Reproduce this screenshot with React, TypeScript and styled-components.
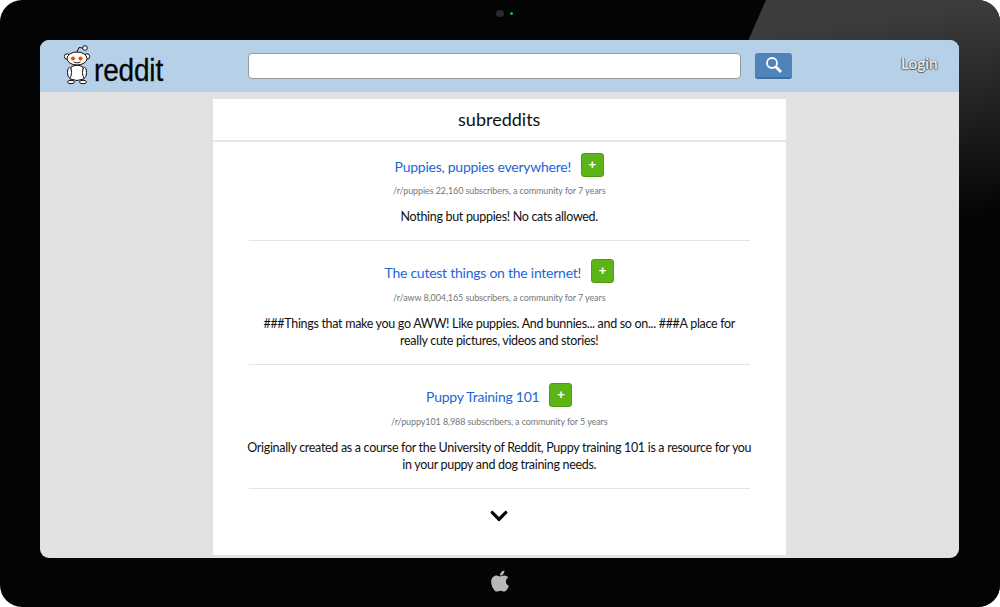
import React from "react";
import styled, { createGlobalStyle } from "styled-components";
import { FaApple, FaChevronDown } from "react-icons/fa";

const Global = createGlobalStyle`
  html, body { margin: 0; padding: 0; background: #fff; }
  body { font-family: Lato, "Open Sans", sans-serif; width: 1000px; height: 607px; overflow: hidden; }
  * { box-sizing: border-box; }
`;

const Tablet = styled.div`
  position: relative;
  width: 1000px;
  height: 607px;
  background: #040404;
  border-radius: 22px;
  box-shadow: inset -1px 0 0 #6a6a6a;
  padding: 40px 41px 49px 40px;
  overflow: hidden;
`;

const Glare = styled.div`
  position: absolute;
  inset: 0;
  background: linear-gradient(172deg, #404040 0, #3c3c3c 140px, #222 240px, #040404 350px);
  clip-path: polygon(766px 0, 1000px 0, 1000px 607px, 500px 607px);
`;

const Camera = styled.div`
  position: absolute;
  top: 10px;
  left: 496px;
  width: 8px;
  height: 7px;
  border-radius: 50%;
  background: #2a2a2e;
`;

const Led = styled.div`
  position: absolute;
  top: 12px;
  left: 510px;
  width: 3px;
  height: 3px;
  border-radius: 50%;
  background: #17b53a;
`;

const Screen = styled.div`
  position: relative;
  height: 518px;
  background: #e2e2e2;
  border-radius: 9px;
  overflow: hidden;
  display: flex;
  flex-direction: column;
`;

const Header = styled.header`
  height: 52px;
  background: #b6d1e7;
  display: flex;
  align-items: flex-start;
  flex-shrink: 0;
`;

const Logo = styled.div`
  width: 208px;
  padding: 5px 0 0 24px;
  display: flex;
  align-items: flex-start;
`;

const LogoWord = styled.span`
  display: inline-block;
  font-family: "Liberation Sans", Arial, sans-serif;
  font-size: 32px;
  line-height: 36px;
  letter-spacing: -0.2px;
  color: #050505;
  margin: 7px 0 0 2px;
  transform: scaleX(0.875);
  transform-origin: left center;
  -webkit-text-stroke: 0.3px #050505;
`;

const SearchInput = styled.input`
  width: 493px;
  height: 26px;
  margin-top: 13px;
  background: #fff;
  border: 1px solid #8f9aa3;
  border-radius: 4px;
  outline: none;
`;

const SearchButton = styled.button`
  width: 37px;
  height: 26px;
  margin: 13px 0 0 14px;
  background: #4e84ba;
  border: none;
  border-bottom: 2px solid #3f6f9f;
  border-radius: 3px;
  color: #fff;
  display: flex;
  align-items: center;
  justify-content: center;
  padding: 0;
`;

const Login = styled.a`
  margin: 12px 0 0 109px;
  font-size: 15.5px;
  line-height: 22px;
  color: #f2f5f8;
  -webkit-text-stroke: 0.25px #f2f5f8;
  text-shadow: 0 1px 1px #333a40, 0 0 1px #333a40, 1px 0 1px #6a737b, -1px 0 1px #6a737b;
`;

const Panel = styled.main`
  width: 573.5px;
  height: 456px;
  margin: 7px 0 0 172.5px;
  background: #fff;
`;

const PanelTitle = styled.h1`
  margin: 0;
  height: 43px;
  border-bottom: 2px solid #e6e6e3;
  font-size: 18px;
  font-weight: 400;
  line-height: 41px;
  text-align: center;
  color: #111;
`;

const List = styled.div`
  margin: 0 36px;
`;

const Meta = styled.div`
  margin-top: 7px;
  font-size: 9px;
  letter-spacing: -0.1px;
  line-height: 14px;
  color: #777;
`;

const Row = styled.article`
  padding: 11px 0 15px;
  border-bottom: 1px solid #e4e4e1;
  text-align: center;

  & + & {
    padding-top: 18px;
  }

  & + & ${Meta} {
    margin-top: 8px;
  }
`;

const TitleLine = styled.div`
  display: flex;
  align-items: center;
  justify-content: center;
  gap: 10px;
  height: 24px;
`;

const Title = styled.a`
  font-size: 14px;
  line-height: 24px;
  letter-spacing: -0.25px;
  padding-top: 3px;
  color: #1b66d6;
`;

const Add = styled.button`
  width: 23px;
  height: 24px;
  padding: 0;
  background: #5cb516;
  border: 1px solid #4f9c12;
  border-radius: 3px;
  color: #fff;
  font-family: "Liberation Sans", sans-serif;
  font-size: 13px;
  font-weight: 700;
  line-height: 20px;
`;

const Description = styled.p`
  margin: 10px -10px 0;
  font-size: 12.5px;
  letter-spacing: -0.31px;
  line-height: 17px;
  white-space: pre;
  color: #111;
`;

const More = styled.div`
  display: flex;
  justify-content: center;
  padding-top: 17px;
  color: #050505;
`;

const Home = styled.div`
  position: absolute;
  left: 488px;
  top: 569px;
  color: #b8b8b8;
  line-height: 0;
`;

const Mascot = () => (
  <svg width="28" height="40" viewBox="0 0 28 40" aria-hidden="true">
    <path d="M12.5 8 L15 2.5 L19 3" fill="none" stroke="#111" strokeWidth="1" />
    <circle cx="21" cy="3" r="2.3" fill="#fff" stroke="#111" />
    <circle cx="3" cy="11.5" r="2.7" fill="#fff" stroke="#111" />
    <circle cx="23" cy="11.5" r="2.7" fill="#fff" stroke="#111" />
    <ellipse cx="13" cy="13.5" rx="10" ry="6.5" fill="#fff" stroke="#111" />
    <circle cx="9" cy="13.5" r="2" fill="#ff4500" />
    <circle cx="16.5" cy="13.5" r="2" fill="#ff4500" />
    <path d="M9.5 17 Q13 19 16.5 17" fill="none" stroke="#111" strokeWidth="0.9" />
    <path d="M7 22 Q13 18.5 19 22 L20 34 Q13 37 6 34 Z" fill="#fff" stroke="#111" />
    <ellipse cx="5.5" cy="27.5" rx="2" ry="5.2" fill="#fff" stroke="#111" />
    <ellipse cx="20.5" cy="27.5" rx="2" ry="5.2" fill="#fff" stroke="#111" />
    <ellipse cx="7" cy="37" rx="3.5" ry="1.7" fill="#fff" stroke="#111" />
    <ellipse cx="19" cy="37" rx="3.5" ry="1.7" fill="#fff" stroke="#111" />
  </svg>
);

const Magnifier = () => (
  <svg width="18" height="18" viewBox="0 0 18 18" aria-hidden="true">
    <circle cx="7" cy="7" r="5" fill="none" stroke="#fff" strokeWidth="1.8" />
    <path d="M10.8 10.8 L16 16" fill="none" stroke="#fff" strokeWidth="2.8" />
  </svg>
);

const items = [
  {
    title: "Puppies, puppies everywhere!",
    meta: "/r/puppies 22,160 subscribers, a community for 7 years",
    text: "Nothing but puppies! No cats allowed.",
  },
  {
    title: "The cutest things on the internet!",
    meta: "/r/aww 8,004,165 subscribers, a community for 7 years",
    text: "###Things that make you go AWW! Like puppies. And bunnies... and so on... ###A place for\nreally cute pictures, videos and stories!",
  },
  {
    title: "Puppy Training 101",
    meta: "/r/puppy101 8,988 subscribers, a community for 5 years",
    text: "Originally created as a course for the University of Reddit, Puppy training 101 is a resource for you\nin your puppy and dog training needs.",
  },
];

export default function App() {
  return (
    <Tablet>
      <Global />
      <Glare />
      <Camera />
      <Led />
      <Screen>
        <Header>
          <Logo>
            <Mascot />
            <LogoWord>reddit</LogoWord>
          </Logo>
          <SearchInput />
          <SearchButton aria-label="Search">
            <Magnifier />
          </SearchButton>
          <Login>Login</Login>
        </Header>
        <Panel>
          <PanelTitle>subreddits</PanelTitle>
          <List>
            {items.map((item) => (
              <Row key={item.title}>
                <TitleLine>
                  <Title>{item.title}</Title>
                  <Add>+</Add>
                </TitleLine>
                <Meta>{item.meta}</Meta>
                <Description>{item.text}</Description>
              </Row>
            ))}
          </List>
          <More>
            <FaChevronDown size={20} />
          </More>
        </Panel>
      </Screen>
      <Home>
        <FaApple size={24} />
      </Home>
    </Tablet>
  );
}
